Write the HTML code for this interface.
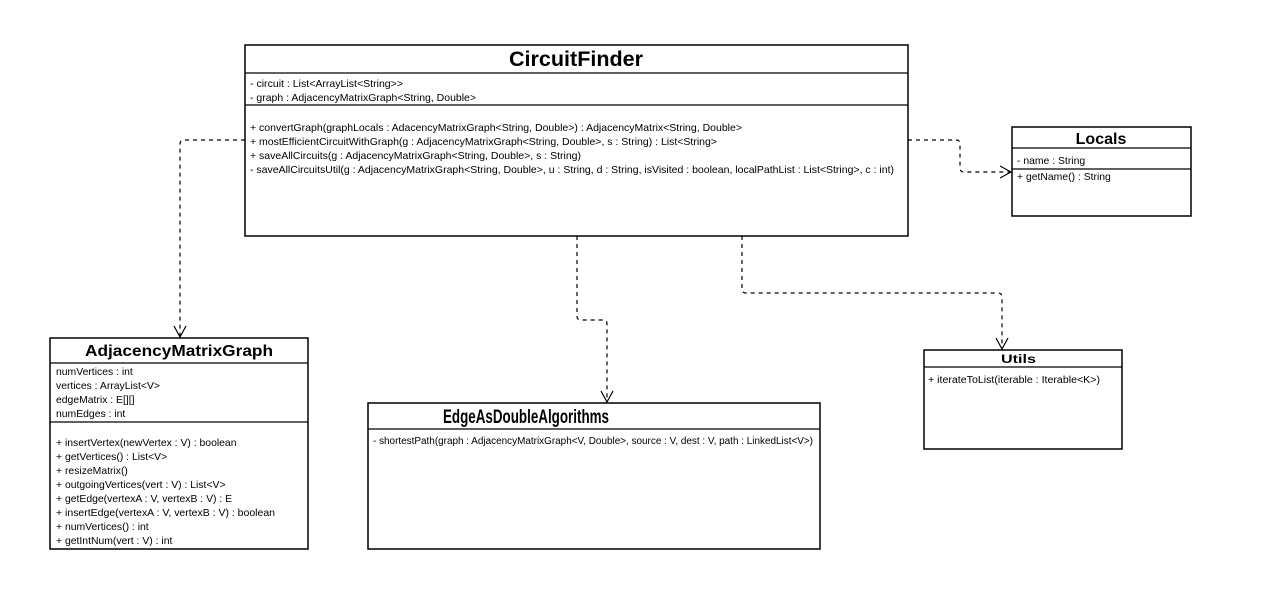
<!DOCTYPE html>
<html><head><meta charset="utf-8"><style>
html,body{margin:0;padding:0;background:#fff;width:1276px;height:611px;overflow:hidden}
svg text{font-family:"Liberation Sans",Arial,sans-serif;fill:#000}
</style></head><body>
<svg width="1276" height="611" viewBox="0 0 1276 611" xmlns="http://www.w3.org/2000/svg">
<g fill="none" stroke="#000" stroke-width="1.2" stroke-dasharray="4,4">
<path d="M245 140 H184 Q180 140 180 144 V336"/>
<path d="M908 140 H956 Q960 140 960 144 V168 Q960 172 964 172 H1010"/>
<path d="M577 236 V316 Q577 320 581 320 H603 Q607 320 607 324 V401"/>
<path d="M742 236 V289 Q742 293 746 293 H998 Q1002 293 1002 297 V348"/>
</g>
<g fill="none" stroke="#000" stroke-width="1.2">
<path d="M174 326 L180 337 L186 326"/>
<path d="M1000 166 L1011 172 L1000 178"/>
<path d="M601 391 L607 402 L613 391"/>
<path d="M996 338 L1002 349 L1008 338"/>
</g>
<g fill="#fff" stroke="#000" stroke-width="1.5">
<rect x="245" y="45" width="663" height="191"/>
<rect x="1012" y="127" width="179" height="89"/>
<rect x="50" y="338" width="258" height="211"/>
<rect x="368" y="403" width="452" height="146"/>
<rect x="924" y="350" width="198" height="99"/>
</g>
<g stroke="#000" stroke-width="1.2">
<line x1="245" y1="73" x2="908" y2="73"/>
<line x1="245" y1="105" x2="908" y2="105"/>
<line x1="1012" y1="148" x2="1191" y2="148"/>
<line x1="1012" y1="169" x2="1191" y2="169"/>
<line x1="50" y1="363" x2="308" y2="363"/>
<line x1="50" y1="422" x2="308" y2="422"/>
<line x1="368" y1="429" x2="820" y2="429"/>
<line x1="924" y1="367" x2="1122" y2="367"/>
</g>
<text x="509" y="66" font-size="21" font-weight="bold" textLength="134" lengthAdjust="spacingAndGlyphs">CircuitFinder</text>
<g font-size="10.5">
<text x="250" y="87" textLength="153" lengthAdjust="spacingAndGlyphs">- circuit : List&lt;ArrayList&lt;String&gt;&gt;</text>
<text x="250" y="101" textLength="226" lengthAdjust="spacingAndGlyphs">- graph : AdjacencyMatrixGraph&lt;String, Double&gt;</text>
<text x="250" y="131" textLength="492" lengthAdjust="spacingAndGlyphs">+ convertGraph(graphLocals : AdacencyMatrixGraph&lt;String, Double&gt;) : AdjacencyMatrix&lt;String, Double&gt;</text>
<text x="250" y="145" textLength="467" lengthAdjust="spacingAndGlyphs">+ mostEfficientCircuitWithGraph(g : AdjacencyMatrixGraph&lt;String, Double&gt;, s : String) : List&lt;String&gt;</text>
<text x="250" y="159" textLength="331" lengthAdjust="spacingAndGlyphs">+ saveAllCircuits(g : AdjacencyMatrixGraph&lt;String, Double&gt;, s : String)</text>
<text x="250" y="173" textLength="644" lengthAdjust="spacingAndGlyphs">- saveAllCircuitsUtil(g : AdjacencyMatrixGraph&lt;String, Double&gt;, u : String, d : String, isVisited : boolean, localPathList : List&lt;String&gt;, c : int)</text>
</g>
<text x="1101" y="144" font-size="16" font-weight="bold" text-anchor="middle">Locals</text>
<g font-size="10.4">
<text x="1017" y="164">- name : String</text>
<text x="1017" y="180">+ getName() : String</text>
</g>
<text x="179" y="356" font-size="16" font-weight="bold" text-anchor="middle" textLength="188" lengthAdjust="spacingAndGlyphs">AdjacencyMatrixGraph</text>
<g font-size="10.4">
<text x="56" y="375">numVertices : int</text>
<text x="56" y="389">vertices : ArrayList&lt;V&gt;</text>
<text x="56" y="403">edgeMatrix : E[][]</text>
<text x="56" y="417">numEdges : int</text>
<text x="56" y="446">+ insertVertex(newVertex : V) : boolean</text>
<text x="56" y="460">+ getVertices() : List&lt;V&gt;</text>
<text x="56" y="474">+ resizeMatrix()</text>
<text x="56" y="488">+ outgoingVertices(vert : V) : List&lt;V&gt;</text>
<text x="56" y="502">+ getEdge(vertexA : V, vertexB : V) : E</text>
<text x="56" y="516" textLength="219" lengthAdjust="spacingAndGlyphs">+ insertEdge(vertexA : V, vertexB : V) : boolean</text>
<text x="56" y="530">+ numVertices() : int</text>
<text x="56" y="544">+ getIntNum(vert : V) : int</text>
</g>
<text x="443" y="423" font-size="19" font-weight="bold" textLength="166" lengthAdjust="spacingAndGlyphs">EdgeAsDoubleAlgorithms</text>
<text x="373" y="444" font-size="10" textLength="440" lengthAdjust="spacingAndGlyphs">- shortestPath(graph : AdjacencyMatrixGraph&lt;V, Double&gt;, source : V, dest : V,  path : LinkedList&lt;V&gt;)</text>
<text x="1001" y="363" font-size="12" font-weight="bold" textLength="35" lengthAdjust="spacingAndGlyphs">Utils</text>
<text x="928" y="383" font-size="10" textLength="172" lengthAdjust="spacingAndGlyphs">+ iterateToList(iterable : Iterable&lt;K&gt;)</text>
</svg>
</body></html>
